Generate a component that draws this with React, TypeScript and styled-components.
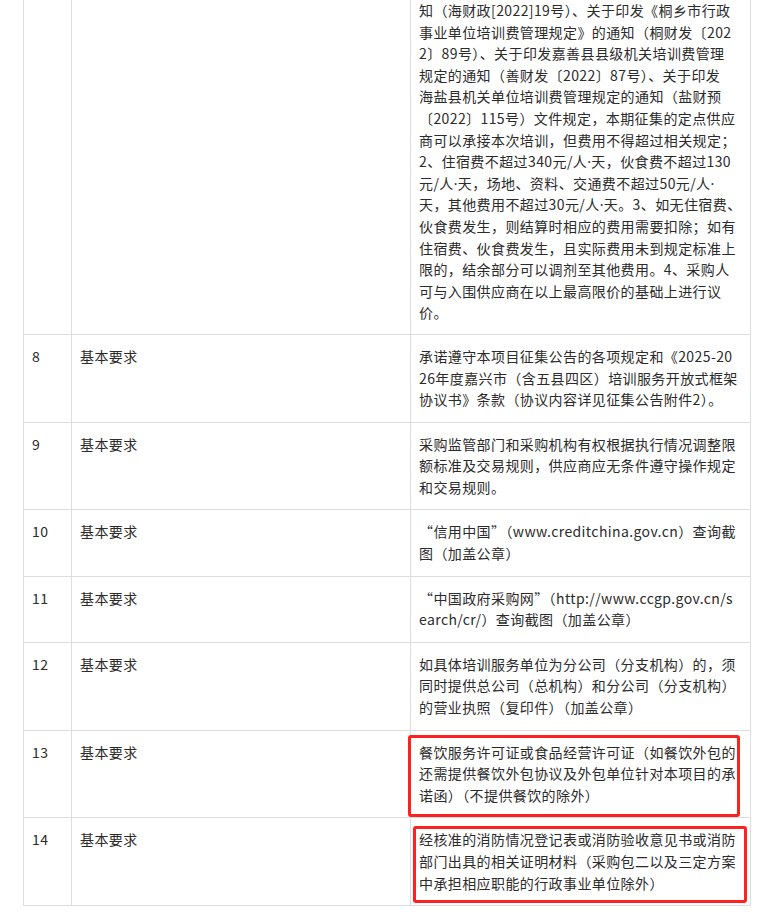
import React from 'react'
import styled, { createGlobalStyle } from 'styled-components'

const GlobalStyle = createGlobalStyle`
  html, body {
    margin: 0;
    padding: 0;
    background: #fff;
  }
  body {
    font-family: "Noto Sans CJK SC", "Noto Sans", sans-serif;
    color: #2b2b2b;
  }
`

const Page = styled.div`
  padding: 0 0 0 23px;
  width: 783px;
  box-sizing: border-box;
`

const Table = styled.table`
  border-collapse: collapse;
  table-layout: fixed;
  width: 727px;
  font-size: 14px;
  line-height: 21.6px;
  letter-spacing: 0.4px;
`

const Cell = styled.td<{ $cut?: boolean }>`
  position: relative;
  vertical-align: top;
  border: 1px solid #ddd;
  border-top: ${({ $cut }) => ($cut ? 'none' : '1px solid #ddd')};
  padding: ${({ $cut }) => ($cut ? '0 8px 10px' : '11px 8px')};
  color: #2b2b2b;
`

const Line = styled.span`
  display: block;
  height: 21.6px;
  white-space: nowrap;
`

// narrow middle dot, as in 人·天
const Dot = styled.span`
  font-family: "Noto Sans", sans-serif;
  line-height: 1;
`

const Mark = styled.span<{ $t: number; $l: number; $r: number; $b: number }>`
  position: absolute;
  top: ${({ $t }) => $t}px;
  left: ${({ $l }) => $l}px;
  right: ${({ $r }) => $r}px;
  bottom: ${({ $b }) => $b}px;
  border: 3px solid #ff2020;
  border-radius: 3px;
  pointer-events: none;
`

type Row = {
  no: string
  kind: string
  lines: string[]
  cut?: boolean
  mark?: { t: number; l: number; r: number; b: number }
}

const rows: Row[] = [
  {
    no: '',
    kind: '',
    cut: true,
    lines: [
      '知（海财政[2022]19号）、关于印发《桐乡市行政',
      '事业单位培训费管理规定》的通知（桐财发〔202',
      '2〕89号）、关于印发嘉善县县级机关培训费管理',
      '规定的通知（善财发〔2022〕87号）、关于印发',
      '海盐县机关单位培训费管理规定的通知（盐财预',
      '〔2022〕115号）文件规定，本期征集的定点供应',
      '商可以承接本次培训，但费用不得超过相关规定；',
      '2、住宿费不超过340元/人·天，伙食费不超过130',
      '元/人·天，场地、资料、交通费不超过50元/人·',
      '天，其他费用不超过30元/人·天。3、如无住宿费、',
      '伙食费发生，则结算时相应的费用需要扣除；如有',
      '住宿费、伙食费发生，且实际费用未到规定标准上',
      '限的，结余部分可以调剂至其他费用。4、采购人',
      '可与入围供应商在以上最高限价的基础上进行议',
      '价。',
    ],
  },
  {
    no: '8',
    kind: '基本要求',
    lines: [
      '承诺遵守本项目征集公告的各项规定和《2025-20',
      '26年度嘉兴市（含五县四区）培训服务开放式框架',
      '协议书》条款（协议内容详见征集公告附件2）。',
    ],
  },
  {
    no: '9',
    kind: '基本要求',
    lines: [
      '采购监管部门和采购机构有权根据执行情况调整限',
      '额标准及交易规则，供应商应无条件遵守操作规定',
      '和交易规则。',
    ],
  },
  {
    no: '10',
    kind: '基本要求',
    lines: ['“信用中国”（www.creditchina.gov.cn）查询截', '图（加盖公章）'],
  },
  {
    no: '11',
    kind: '基本要求',
    lines: ['“中国政府采购网”（http://www.ccgp.gov.cn/s', 'earch/cr/）查询截图（加盖公章）'],
  },
  {
    no: '12',
    kind: '基本要求',
    lines: [
      '如具体培训服务单位为分公司（分支机构）的，须',
      '同时提供总公司（总机构）和分公司（分支机构）',
      '的营业执照（复印件）（加盖公章）',
    ],
  },
  {
    no: '13',
    kind: '基本要求',
    mark: { t: 4, l: -3, r: 10, b: 0 },
    lines: [
      '餐饮服务许可证或食品经营许可证（如餐饮外包的',
      '还需提供餐饮外包协议及外包单位针对本项目的承',
      '诺函）（不提供餐饮的除外）',
    ],
  },
  {
    no: '14',
    kind: '基本要求',
    mark: { t: 8, l: 2, r: 3, b: 2 },
    lines: [
      '经核准的消防情况登记表或消防验收意见书或消防',
      '部门出具的相关证明材料（采购包二以及三定方案',
      '中承担相应职能的行政事业单位除外）',
    ],
  },
]

const renderLine = (text: string) =>
  text.split(/(·)/).map((part, k) => (part === '·' ? <Dot key={k}>{part}</Dot> : part))

const App: React.FC = () => {
  return (
    <Page>
      <GlobalStyle />
      <Table>
        <colgroup>
          <col style={{ width: 48 }} />
          <col style={{ width: 339 }} />
          <col style={{ width: 340 }} />
        </colgroup>
        <tbody>
          {rows.map((r, i) => (
            <tr key={i}>
              <Cell $cut={r.cut}>{r.no}</Cell>
              <Cell $cut={r.cut}>{r.kind}</Cell>
              <Cell $cut={r.cut}>
                {r.lines.map((l, j) => (
                  <Line key={j}>{renderLine(l)}</Line>
                ))}
                {r.mark && <Mark $t={r.mark.t} $l={r.mark.l} $r={r.mark.r} $b={r.mark.b} />}
              </Cell>
            </tr>
          ))}
        </tbody>
      </Table>
    </Page>
  )
}

export default App
